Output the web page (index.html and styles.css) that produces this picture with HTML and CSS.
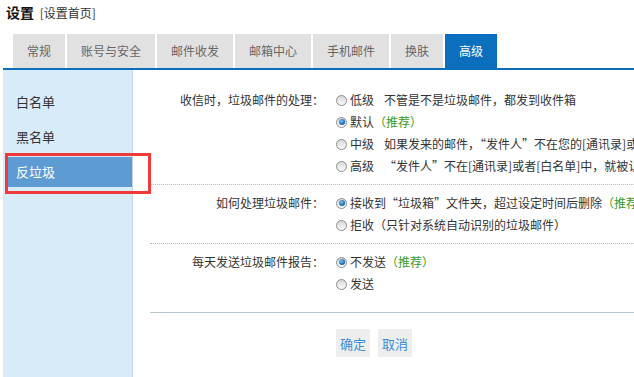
FILE: index.html
```html
<!DOCTYPE html>
<html lang="zh-CN">

<head>
  <meta charset="utf-8">
  <title>设置 - 反垃圾</title>
  <link rel="stylesheet" href="styles.css">
</head>

<body>
  <div class="page">
    <div class="top">
      <b class="title">设置</b>
      <a class="home" href="#">[设置首页]</a>
    </div>

    <ul class="tabs">
      <li>常规</li>
      <li>账号与安全</li>
      <li>邮件收发</li>
      <li>邮箱中心</li>
      <li>手机邮件</li>
      <li>换肤</li>
      <li class="on">高级</li>
    </ul>

    <div class="layout">
      <!-- left menu -->
      <div class="side">
        <div class="item">白名单</div>
        <div class="item">黑名单</div>
        <div class="item on">反垃圾</div>
      </div>
      <div class="mark"></div>

      <!-- settings -->
      <div class="main">
        <div class="sect">
          <div class="label">收信时，垃圾邮件的处理：</div>
          <div class="opts">
            <div class="opt"><span class="radio"></span>低级<span class="desc">不管是不是垃圾邮件，都发到收件箱</span></div>
            <div class="opt"><span class="radio on"></span>默认<span class="tip">（推荐）</span></div>
            <div class="opt"><span class="radio"></span>中级<span class="desc">如果发来的邮件，“发件人”不在您的[通讯录]或[白名单]中，就被认为是垃圾邮件</span></div>
            <div class="opt"><span class="radio"></span>高级<span class="desc">“发件人”不在[通讯录]或者[白名单]中，就被认为是垃圾邮件</span></div>
          </div>
        </div>

        <div class="sect">
          <div class="label">如何处理垃圾邮件：</div>
          <div class="opts">
            <div class="opt"><span class="radio on"></span>接收到“垃圾箱”文件夹，超过设定时间后删除<span class="tip">（推荐）</span></div>
            <div class="opt"><span class="radio"></span>拒收（只针对系统自动识别的垃圾邮件）</div>
          </div>
        </div>

        <div class="sect last">
          <div class="label">每天发送垃圾邮件报告：</div>
          <div class="opts">
            <div class="opt"><span class="radio on"></span>不发送<span class="tip">（推荐）</span></div>
            <div class="opt"><span class="radio"></span>发送</div>
          </div>
        </div>

        <div class="btns">
          <button class="btn">确定</button>
          <button class="btn">取消</button>
        </div>
      </div>
    </div>
  </div>
</body>

</html>
```

FILE: styles.css
```css
html,
body {
  margin: 0;
  padding: 0;
  overflow: hidden;
  background-color: #ffffff;
}

body {
  font-family: "Noto Sans CJK SC", "Noto Sans", sans-serif;
  font-size: 12px;
  color: #333;
}

.page {
  padding-left: 3px;
}

.top {
  height: 24px;
  line-height: 24px;
  padding-left: 3px;
  white-space: nowrap;
}

.title {
  font-size: 14px;
  color: #111;
}

.home {
  margin-left: 3px;
  color: #333;
  text-decoration: none;
}

.tabs {
  list-style: none;
  display: flex;
  gap: 2px;
  margin: 10px 0 0;
  padding: 0 0 0 10px;
  border-bottom: 2px solid #0d6db8;
  white-space: nowrap;
}

.tabs li {
  height: 34px;
  line-height: 34px;
  padding: 0 14px;
  background-color: #e1e1e1;
  color: #666;
}

.tabs li.on {
  background-color: #0b6fbd;
  color: #ffffff;
}

.layout {
  position: relative;
  display: flex;
  min-height: calc(100vh - 70px);
}

/* left menu */
.side {
  flex: 0 0 130px;
  padding: 17px 0 0 4px;
  box-sizing: border-box;
  background-color: #d7ebf9;
  border-right: 1px solid #c5d3de;
}

.item {
  height: 30px;
  line-height: 30px;
  margin-bottom: 5px;
  padding-left: 9px;
  font-size: 13px;
  color: #333;
}

.item.on {
  background-color: #5d9bd3;
  color: #ffffff;
}

/* red annotation frame */
.mark {
  position: absolute;
  left: 2px;
  top: 83px;
  width: 146px;
  height: 41px;
  box-sizing: border-box;
  border: 3px solid #f03a3a;
}

/* settings */
.main {
  flex: 1;
  min-width: 0;
  padding: 12px 0 0 17px;
  white-space: nowrap;
}

.sect {
  display: flex;
  padding: 7px 0;
  border-bottom: 1px dotted #bdbdbd;
}

.sect.last {
  border-bottom: none;
  padding-bottom: 17px;
}

.label {
  flex: 0 0 174px;
  text-align: right;
  line-height: 22px;
  color: #333;
}

.opts {
  margin-left: 12px;
}

.opt {
  display: flex;
  align-items: center;
  height: 22px;
  line-height: 22px;
}

.desc {
  margin-left: 10px;
}

.tip {
  color: #3a9a1e;
}

.radio {
  position: relative;
  flex: 0 0 11px;
  width: 11px;
  height: 11px;
  margin-right: 3px;
  box-sizing: border-box;
  border: 1px solid #8d8d8d;
  border-radius: 50%;
  background: linear-gradient(#d8d8d8, #fbfbfb);
}

.radio.on:after {
  position: absolute;
  content: "";
  left: 1.5px;
  top: 1.5px;
  width: 6px;
  height: 6px;
  border-radius: 50%;
  background: radial-gradient(circle at 40% 35%, #7fc4f2, #0a5ea8 70%);
}

.btns {
  display: flex;
  gap: 8px;
  border-top: 1px solid #b9c5cd;
  padding: 16px 0 0 186px;
}

.btn {
  width: 34px;
  height: 28px;
  padding: 0;
  border: none;
  background-color: #eeeeee;
  color: #3b8fd9;
  font-family: "Noto Sans CJK SC", sans-serif;
  font-size: 13px;
}
```
